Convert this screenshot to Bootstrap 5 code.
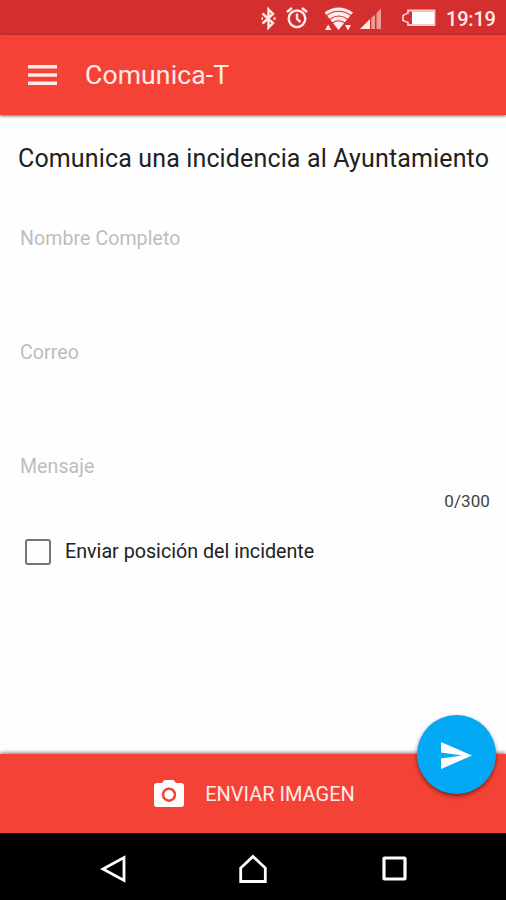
<!DOCTYPE html>
<html lang="es">
<head>
<meta charset="utf-8">
<meta name="viewport" content="width=device-width, initial-scale=1">
<title>Comunica-T</title>
<link href="https://cdn.jsdelivr.net/npm/bootstrap@5.3.0/dist/css/bootstrap.min.css" rel="stylesheet">
<style>
body { font-family: Roboto, "Liberation Sans", sans-serif; background: #fefefe; color: #212121; height: 900px; overflow: hidden; }
svg { display: block; flex: none; }
.status-strip { height: 35px; background: #d32f2f; padding-right: 11px; color: #ffebe9; }
.status-time { font-size: 20px; font-weight: 500; line-height: 35px; width: 49px; margin-left: 10px; padding-top: 3px; letter-spacing: -.2px; white-space: nowrap; }
.app-bar { height: 80px; background: #f44336; padding: 0 0 0 28px; box-shadow: 0 1px 3px rgba(0,0,0,.6); z-index: 1; }
.app-title { font-size: 26.6px; line-height: 32px; color: #ffebe9; margin-left: 28px; letter-spacing: .1px; }
.page-title { font-size: 25px; line-height: 30px; margin: 29px 0 0 18px; white-space: nowrap; letter-spacing: .14px; }
.field { height: 114px; padding-left: 20px; }
.field-label { font-size: 19.5px; line-height: 24px; color: #bdbdbd; letter-spacing: .1px; }
.field-input { background: transparent; height: 44px; }
.fields { margin-top: 53px; }
.field-last { height: 36px; }
.counter { font-size: 17px; line-height: 20px; color: #424242; padding-right: 16px; letter-spacing: .1px; }
.check-row { margin: 28px 0 0 25px; gap: 14px; }
.check-row .form-check-input { width: 26px; height: 26px; border: 2.5px solid #757575; border-radius: 3px; background-color: transparent; }
.check-label { font-size: 19.7px; line-height: 26px; }
.action-bar { height: 79px; background: #f44336; box-shadow: 0 -1px 4px rgba(0,0,0,.55); }
.action-btn { color: #ffebe9; font-size: 20px; line-height: 24px; gap: 21px; margin-left: 3px; }
.send-btn { width: 79px; height: 79px; right: 10.5px; top: -39px; background: #03a9f4; box-shadow: 0 2px 4px rgba(0,0,0,.5); padding: 2px 0 0 0; }
.system-nav { height: 67px; background: #000; padding: 4px 99px 0 100px; }
.home-icon { margin-left: -3px; }
</style>
<script src="https://cdn.jsdelivr.net/npm/bootstrap@5.3.0/dist/js/bootstrap.bundle.min.js"></script>
</head>
<body class="d-flex flex-column m-0">
<div class="status-strip d-flex align-items-center justify-content-end flex-shrink-0">
  <svg width="125" height="35" viewBox="256 0 125 35" fill="none" stroke="#ffebe9" stroke-width="2.400">
    <path d="M262.500 13.500l10.500 9.500-4.500 4.500V9.500l4.500 4.500-10.500 9.500"/>
    <path d="M261.500 18.500h1.500M273.500 18.500h2" stroke-width="2.500"/>
    <circle cx="297" cy="18.800" r="8.300"/>
    <path d="M297 13.500v5.500l3.500 3M287 12l5-4M302 8l5 4"/>
    <path d="M324.500 12.500Q338.500 2.500 353 12.500L338.500 30Z" fill="#ffebe9" stroke="none"/>
    <g stroke="#d32f2f" stroke-width="1.100"><path d="M326.500 15.500Q338.500 7 351 15.500M329.500 19.500Q338.500 12.500 348 19.500M332.500 23Q338.500 18.500 345 23"/></g>
    <path d="M325 30l3.200-5.500 3.200 5.500zM345 25h6l-3 5.500z" fill="#ffebe9" stroke="none"/>
    <path d="M360 29L370 19v10z" fill="#ffebe9" stroke="none"/>
    <path d="M371.300 18l3.700-3.500V29h-3.700zM376.500 13L381 8.500V29h-4.500z" fill="#ee9a96" stroke="none"/>
  </svg>
  <svg class="ms-3 ps-1" width="39" height="35" viewBox="401 0 35 35">
    <path d="M434.500 10.500H408V13l-5 2.500v5l5 2V25h26.500z" fill="none" stroke="#ffc9c6" stroke-width="1.800"/>
    <path d="M412 11.500h22V24H412z" fill="#fff"/>
  </svg>
  <span class="status-time">19:19</span>
</div>
<nav class="app-bar navbar flex-nowrap justify-content-start flex-shrink-0">
  <svg width="29" height="21" viewBox="0 0 29 21" fill="#ffebe9"><path d="M0 0h29v3.500H0zM0 8.300h29v3.500H0zM0 16.500h29v3.500H0z"/></svg>
  <span class="app-title">Comunica-T</span>
</nav>
<main class="flex-grow-1 d-flex flex-column">
  <h1 class="page-title fw-normal">Comunica una incidencia al Ayuntamiento</h1>
  <form class="fields">
    <div class="field"><label class="field-label d-block" for="name">Nombre Completo</label><input id="name" class="field-input form-control border-0 p-0" type="text"></div>
    <div class="field"><label class="field-label d-block" for="mail">Correo</label><input id="mail" class="field-input form-control border-0 p-0" type="email"></div>
    <div class="field field-last"><label class="field-label d-block">Mensaje</label></div>
    <div class="counter text-end">0/300</div>
    <div class="check-row d-flex align-items-center">
      <input id="pos" class="form-check-input m-0" type="checkbox">
      <label class="check-label" for="pos">Enviar posición del incidente</label>
    </div>
  </form>
</main>
<footer class="action-bar position-relative d-flex align-items-center justify-content-center flex-shrink-0">
  <button class="action-btn btn border-0 p-0 d-flex align-items-center" type="button">
    <svg width="30" height="27" viewBox="0 0 30 27"><path fill="#fff" fill-rule="evenodd" d="M10.500 0h9l2.500 3h5q3 0 3 3v18q0 3-3 3H3q-3 0-3-3V6q0-3 3-3h5zM15 7.500a7.200 7.200 0 1 0 0 14.400 7.200 7.200 0 1 0 0-14.400z"/><circle cx="15" cy="14.700" r="4.700" fill="#fff"/></svg>
    <span class="action-text">ENVIAR IMAGEN</span>
  </button>
  <button class="send-btn btn border-0 rounded-circle position-absolute d-flex align-items-center justify-content-center" type="button" aria-label="Enviar">
    <svg width="31" height="27" viewBox="0 0 31 27"><path fill="#fff" d="M0 0l31 13.500L0 27V16.500l21-3-21-3z"/></svg>
  </button>
</footer>
<div class="system-nav d-flex justify-content-between align-items-center flex-shrink-0">
  <svg width="27" height="30" viewBox="0 0 27 30" fill="none" stroke="#fff" stroke-width="2.800"><path d="M24 3.500v23L3 15z"/></svg>
  <svg class="home-icon" width="30" height="30" viewBox="0 0 30 30" fill="none" stroke="#fff" stroke-width="2.800"><path d="M15 2.500L27.300 14v13.500H2.700V14z"/></svg>
  <svg width="25" height="25" viewBox="0 0 25 25" fill="none" stroke="#fff" stroke-width="3.200"><rect x="2" y="2" width="21" height="21" rx=".5"/></svg>
</div>
</body>
</html>
